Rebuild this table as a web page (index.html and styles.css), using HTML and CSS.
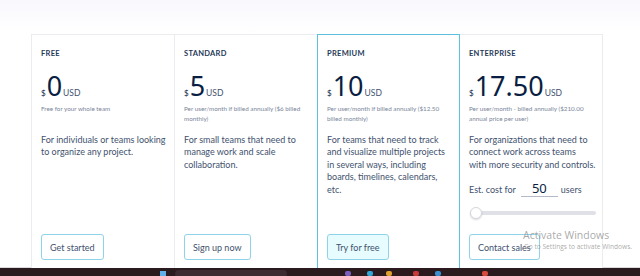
FILE: index.html
```html
<!DOCTYPE html>
<html>
<head>
<meta charset="utf-8">
<link rel="stylesheet" href="styles.css">
</head>
<body>
<div class="page">
  <div class="plans">
    <div class="plan">
      <div class="name">FREE</div>
      <div class="price"><span class="cur">$</span><span class="amt">0</span><span class="usd">USD</span></div>
      <div class="note">Free for your whole team</div>
      <p class="desc">For individuals or teams looking<br>to organize any project.</p>
      <button class="btn">Get started</button>
    </div>
    <div class="plan">
      <div class="name">STANDARD</div>
      <div class="price"><span class="cur">$</span><span class="amt">5</span><span class="usd">USD</span></div>
      <div class="note">Per user/month if billed annually ($6 billed<br>monthly)</div>
      <p class="desc">For small teams that need to<br>manage work and scale<br>collaboration.</p>
      <button class="btn">Sign up now</button>
    </div>
    <div class="plan featured">
      <div class="name">PREMIUM</div>
      <div class="price"><span class="cur">$</span><span class="amt">10</span><span class="usd">USD</span></div>
      <div class="note">Per user/month if billed annually ($12.50<br>billed monthly)</div>
      <p class="desc">For teams that need to track<br>and visualize multiple projects<br>in several ways, including<br>boards, timelines, calendars,<br>etc.</p>
      <button class="btn btn-fill">Try for free</button>
    </div>
    <div class="plan">
      <div class="name">ENTERPRISE</div>
      <div class="price"><span class="cur">$</span><span class="amt">17.50</span><span class="usd">USD</span></div>
      <div class="note">Per user/month - billed annually ($210.00<br>annual price per user)</div>
      <p class="desc">For organizations that need to<br>connect work across teams<br>with more security and controls.</p>
      <div class="est"><span>Est. cost for</span><span class="users-input">50</span><span>users</span></div>
      <div class="slider"><span class="thumb"></span></div>
      <button class="btn">Contact sales</button>
    </div>
  </div>
  <div class="watermark">
    <div class="wm-title">Activate Windows</div>
    <div class="wm-sub">Go to Settings to activate Windows.</div>
  </div>
</div>
<div class="taskbar">
  <span class="tb-win"></span>
  <span class="tb-search"></span>
  <span class="tb-icon c1"></span>
  <span class="tb-icon c2"></span>
  <span class="tb-icon c3"></span>
  <span class="tb-icon c4"></span>
  <span class="tb-icon c5"></span>
  <span class="tb-icon c6"></span>
</div>
</body>
</html>
```

FILE: styles.css
```css
* { box-sizing: border-box; }
html, body { margin: 0; padding: 0; }
body {
  width: 640px;
  height: 276px;
  overflow: hidden;
  font-family: Lato, "Open Sans", sans-serif;
  background: #fff;
}
.page {
  position: relative;
  height: 268px;
  padding: 34px 0 0 31px;
  background: linear-gradient(#f8f8fd 0px, #fdfdff 24px, #ffffff 34px);
  border-bottom: 1px solid #d9d9de;
}
.plans {
  display: flex;
  height: 234px;
}
.plan {
  width: 143px;
  height: 100%;
  display: flex;
  flex-direction: column;
  padding: 14px 6px 8px 9px;
  background: #fff;
  border: 1px solid #ebecf0;
  border-right: none;
  border-bottom: none;
}
.plan:last-child { border-right: 1px solid #ebecf0; }
.plan.featured {
  border: 1.5px solid #5ec0e0;
  border-bottom: none;
}
.plan.featured + .plan { border-left: none; }
.name {
  font-size: 7.5px;
  font-weight: 700;
  letter-spacing: 0.3px;
  color: #253858;
  line-height: 10px;
}
.price {
  margin-top: 14px;
  display: flex;
  align-items: baseline;
  color: #091e42;
}
.cur { font-size: 8px; line-height: 1; margin-right: 1px; }
.amt { font-family: "Noto Sans", Inter, sans-serif; font-size: 27px; line-height: 26px; }
.usd { font-size: 8.5px; line-height: 1; color: #42526e; margin-left: 1px; }
.note {
  margin-top: 5px;
  font-size: 6.3px;
  line-height: 10px;
  color: #7a869a;
  min-height: 20px;
  white-space: nowrap;
}
.desc {
  margin: 10px 0 0 0;
  font-size: 9px;
  line-height: 12.4px;
  color: #42526e;
  white-space: nowrap;
}
.est {
  margin-top: 9px;
  display: flex;
  align-items: baseline;
  font-size: 9px;
  color: #42526e;
}
.users-input {
  width: 37px;
  margin: 0 3px 0 5px;
  text-align: center;
  font-family: "Noto Sans", sans-serif;
  font-size: 13px;
  color: #091e42;
  border-bottom: 1px solid #b3bac5;
  line-height: 16px;
}
.slider {
  position: relative;
  margin: 14px 0 0 1px;
  width: 126px;
  height: 4px;
  border-radius: 2px;
  background: #dfe1e6;
}
.thumb {
  position: absolute;
  left: 0px;
  top: -4px;
  width: 12px;
  height: 12px;
  border-radius: 50%;
  background: #fff;
  border: 1px solid #d4d7dd;
  box-shadow: 0 1px 2px rgba(0,0,0,0.15);
}
.btn {
  margin-top: auto;
  align-self: flex-start;
  height: 26px;
  padding: 0 8px;
  font-family: Lato, sans-serif;
  font-size: 9px;
  color: #42526e;
  background: #fff;
  border: 1px solid #8fd3e8;
  border-radius: 3px;
}
.btn-fill { background: #e6fcff; }
.watermark {
  position: absolute;
  left: 523px;
  top: 229px;
  white-space: nowrap;
  color: rgba(140,140,140,0.75);
  font-family: "Open Sans", sans-serif;
  pointer-events: none;
}
.wm-title { font-size: 10.5px; line-height: 13px; }
.wm-sub { font-size: 6.6px; line-height: 10px; margin-left: 1px; }
.taskbar {
  position: relative;
  height: 8px;
  background: #2b1b1f;
}
.tb-win { position: absolute; left: 160px; top: 3px; width: 6px; height: 5px; background: #5fb0e8; }
.tb-search { position: absolute; left: 175px; top: 2px; width: 112px; height: 8px; border-radius: 5px; background: #3c2c31; }
.tb-icon { position: absolute; top: 3px; width: 6px; height: 5px; border-radius: 2px; }
.c1 { left: 345px; background: #7a5fbf; }
.c2 { left: 367px; background: #2fa8d8; }
.c3 { left: 386px; background: #e0a030; }
.c4 { left: 413px; background: #c83a3a; }
.c5 { left: 435px; background: #3a8fd0; }
.c6 { left: 482px; background: #d84a3a; }
```
